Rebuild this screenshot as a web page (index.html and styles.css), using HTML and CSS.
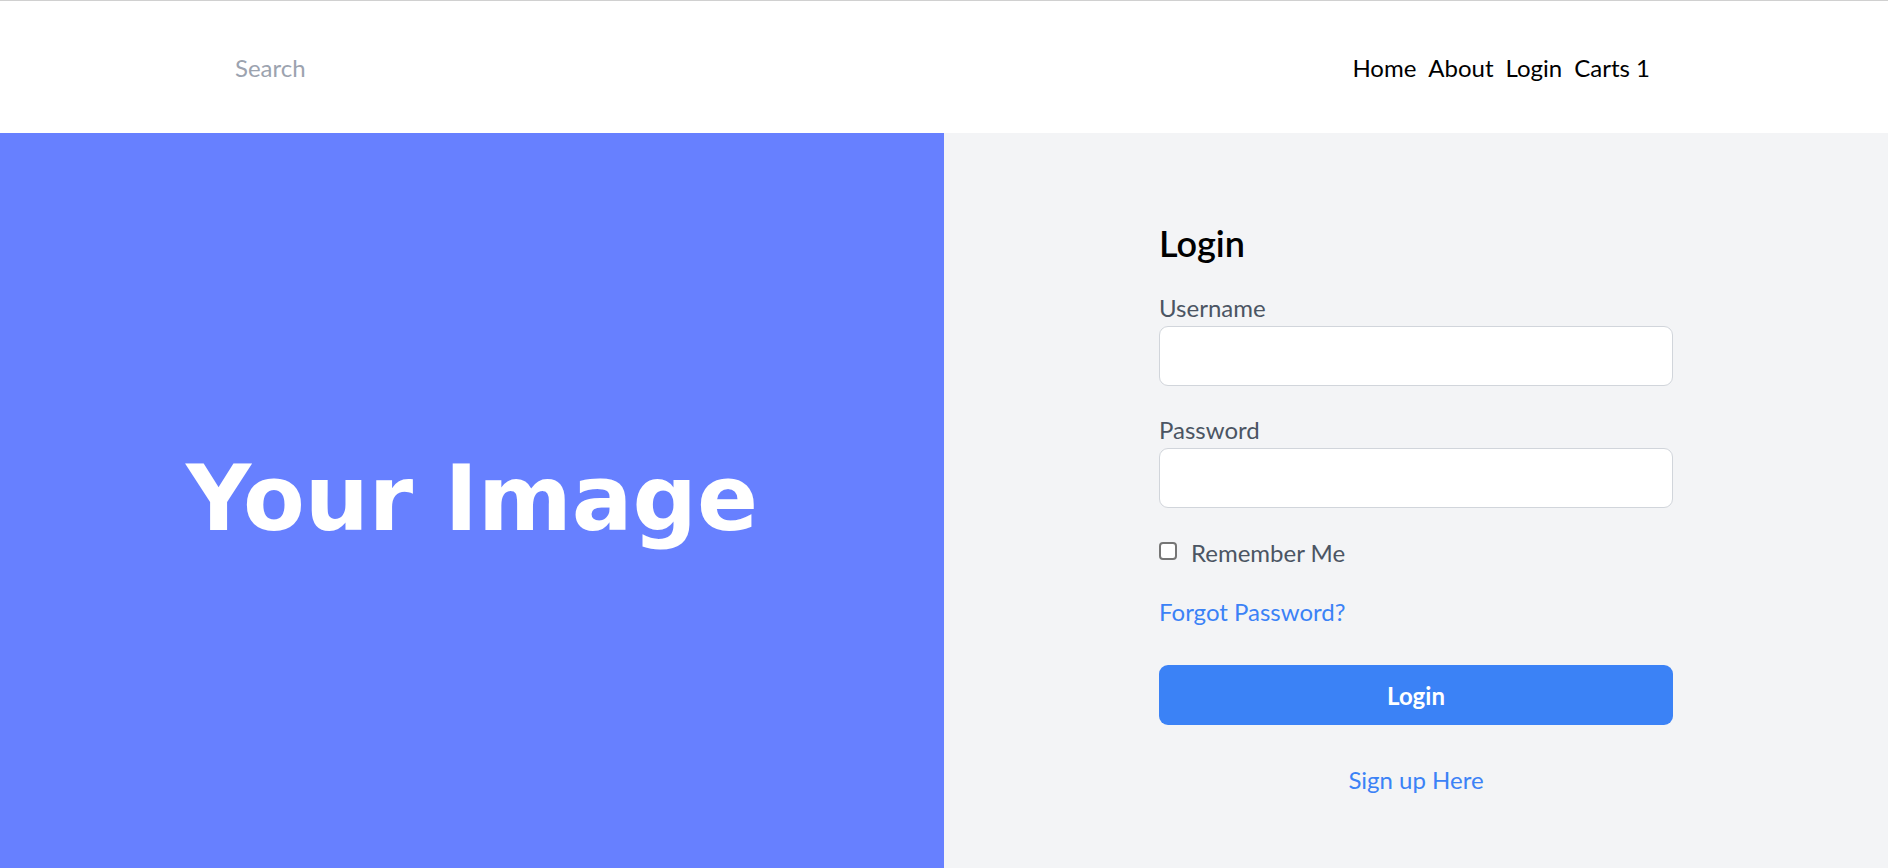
FILE: index.html
```html
<!DOCTYPE html>
<html lang="en">
<head>
<meta charset="utf-8">
<title>Login</title>
<link rel="stylesheet" href="styles.css">
</head>
<body>
<header class="topbar">
  <input class="search" type="text" placeholder="Search">
  <nav class="nav">
    <a href="#">Home</a>
    <a href="#">About</a>
    <a href="#">Login</a>
    <a href="#">Carts 1</a>
  </nav>
</header>
<main class="page">
  <section class="hero">
    <span class="hero-text">Your Image</span>
  </section>
  <section class="panel">
    <form class="form">
      <h2 class="title">Login</h2>
      <div class="field">
        <label class="label" for="u">Username</label>
        <input class="input" id="u" type="text">
      </div>
      <div class="field">
        <label class="label" for="p">Password</label>
        <input class="input" id="p" type="password">
      </div>
      <label class="check-row">
        <input class="check" type="checkbox">
        <span>Remember Me</span>
      </label>
      <a class="link forgot" href="#">Forgot Password?</a>
      <button class="btn" type="button">Login</button>
      <div class="signup"><a class="link" href="#">Sign up Here</a></div>
    </form>
  </section>
</main>
</body>
</html>
```

FILE: styles.css
```css
* { box-sizing: border-box; }
html, body { margin: 0; padding: 0; }
body {
  font-family: Lato, "Open Sans", sans-serif;
  font-size: 24px;
  line-height: 36px;
  color: #000;
  border-top: 1px solid #d0d0d0;
  overflow: hidden;
}
.topbar {
  height: 132px;
  background: #fff;
  display: flex;
  align-items: center;
  justify-content: space-between;
  padding: 2px 238px 0 235px;
}
.search {
  border: none;
  outline: none;
  background: transparent;
  font: inherit;
  padding: 0;
  width: 300px;
  color: #374151;
}
.search::placeholder { color: #9ca3af; }
.nav {
  display: flex;
  gap: 12px;
}
.nav a {
  color: #000;
  text-decoration: none;
}
.page {
  display: grid;
  grid-template-columns: 1fr 1fr;
  height: 735px;
}
.hero {
  background: #6780ff;
  display: flex;
  align-items: center;
  justify-content: center;
}
.hero-text {
  font-family: "DejaVu Sans", sans-serif;
  font-weight: 700;
  font-size: 90px;
  line-height: 1;
  letter-spacing: 0;
  color: #fff;
  position: relative;
  top: -2px;
}
.panel {
  background: #f3f4f6;
  display: flex;
  justify-content: center;
}
.form {
  width: 514px;
  padding-top: 86px;
  display: flex;
  flex-direction: column;
}
.title {
  margin: 0 0 23px;
  font-size: 36px;
  line-height: 48px;
  font-weight: 600;
}
.field {
  display: flex;
  flex-direction: column;
  margin-bottom: 26px;
}
.label {
  color: #4b5563;
}
.input {
  height: 60px;
  border: 1px solid #d1d5db;
  border-radius: 9px;
  background: #fff;
  font: inherit;
  padding: 0 15px;
}
.check-row {
  display: flex;
  align-items: center;
  gap: 14px;
  color: #4b5563;
  margin-top: 1px;
  margin-bottom: 23px;
}
.check {
  appearance: none;
  -webkit-appearance: none;
  margin: 0;
  width: 18px;
  height: 18px;
  border: 2px solid #767676;
  border-radius: 4px;
  background: #fff;
  position: relative;
  top: -2px;
}
.link {
  color: #3b82f6;
  text-decoration: none;
}
.forgot {
  align-self: flex-start;
  margin-bottom: 35px;
}
.btn {
  height: 60px;
  border: none;
  border-radius: 9px;
  background: #3b82f6;
  color: #fff;
  font: inherit;
  font-weight: 700;
  padding-top: 2px;
  margin-bottom: 37px;
  cursor: pointer;
}
.signup {
  text-align: center;
}
```
